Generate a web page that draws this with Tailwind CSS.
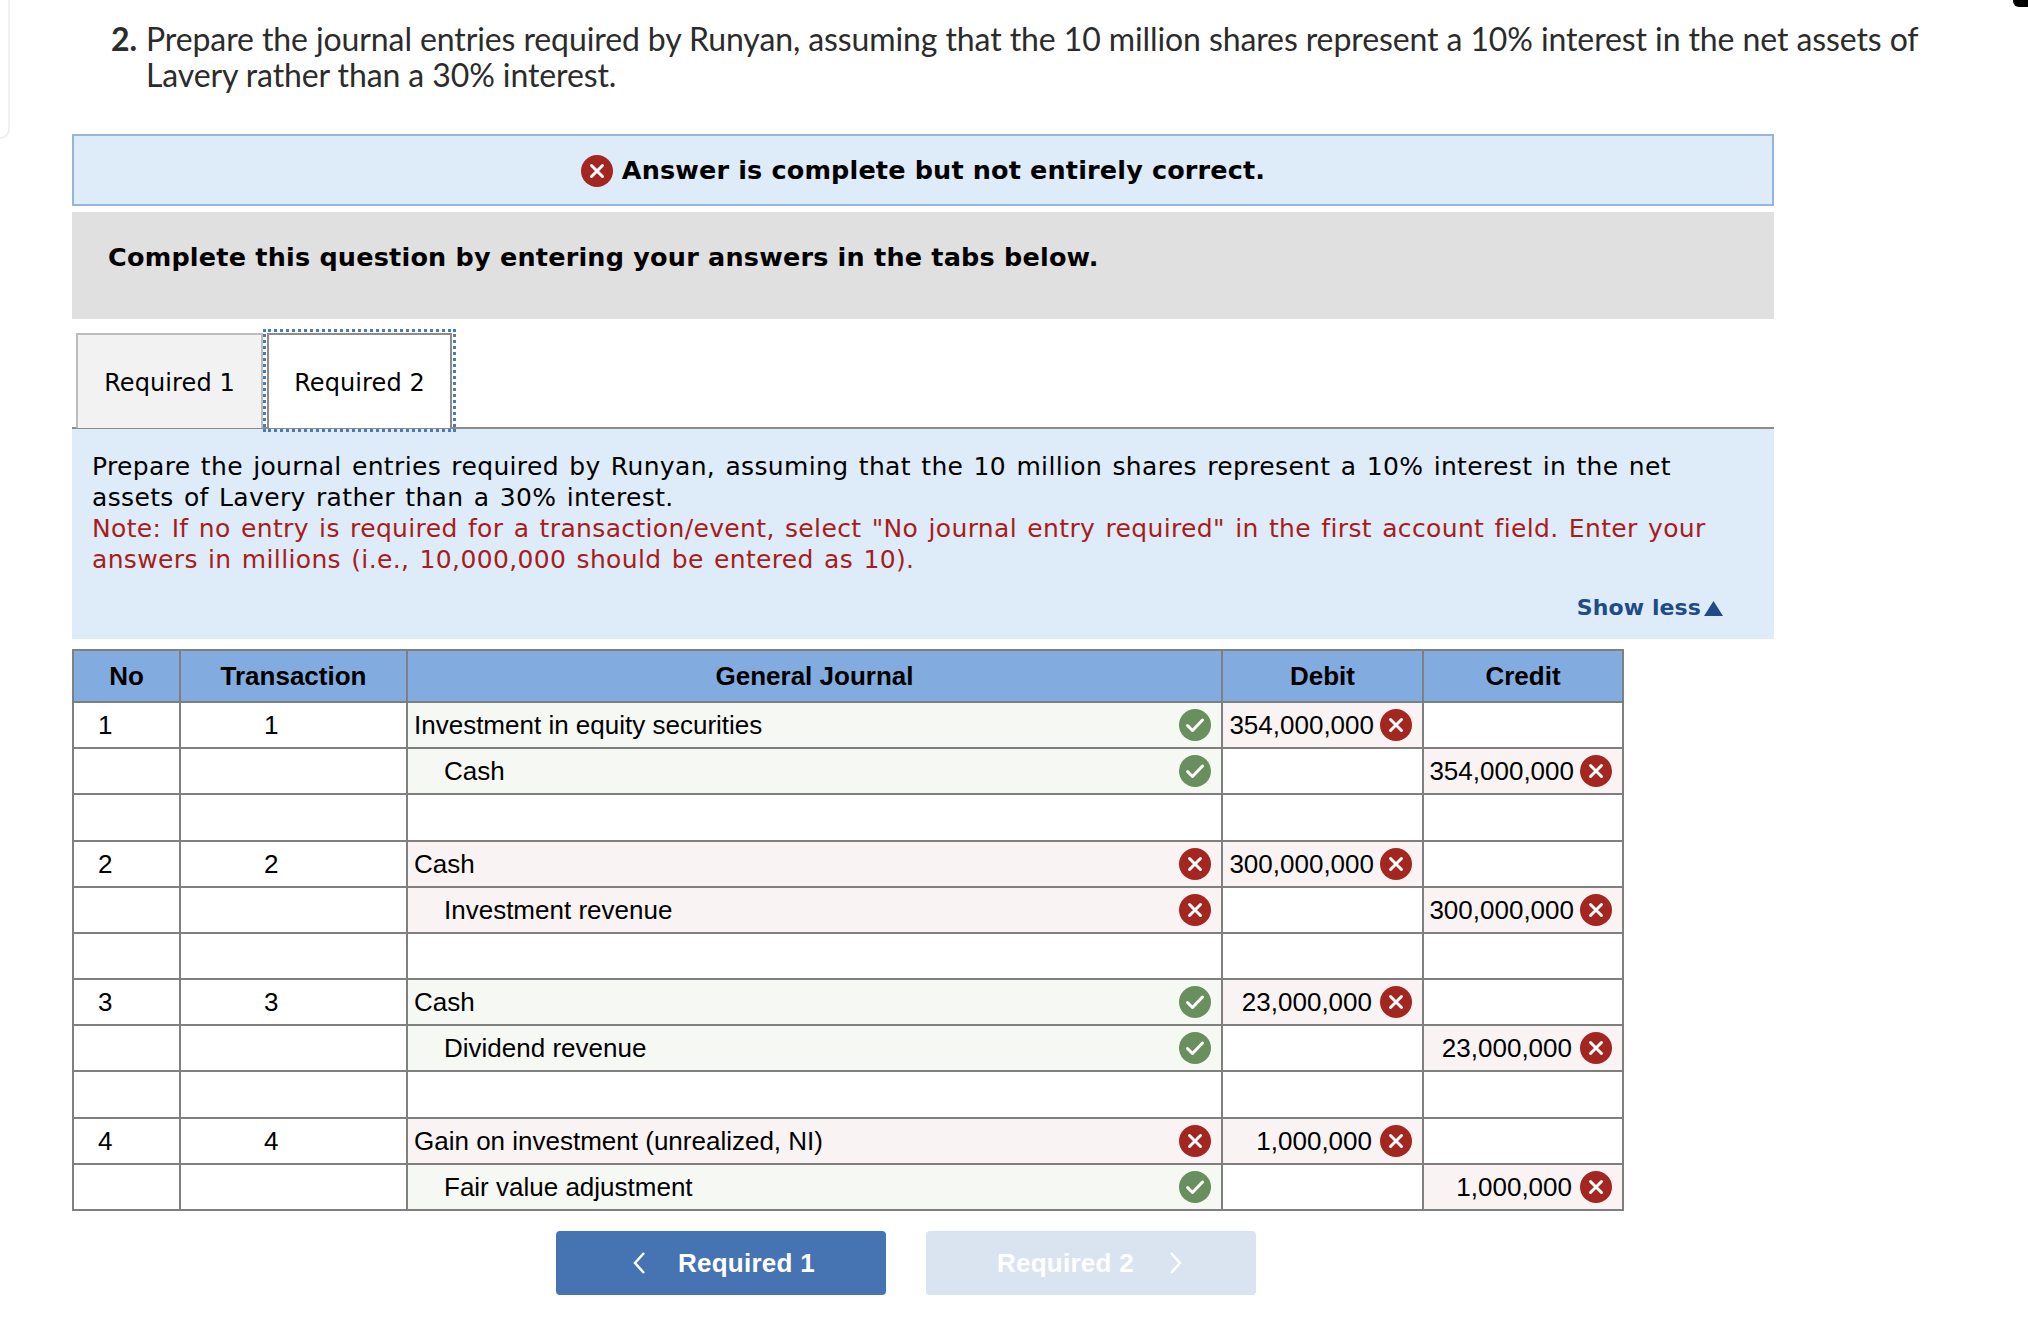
<!DOCTYPE html>
<html lang="en">
<head>
<meta charset="utf-8">
<title>Journal entries</title>
<script src="https://cdn.jsdelivr.net/npm/@tailwindcss/browser@4"></script>
</head>
<body class="bg-white relative w-[2028px] h-[1338px] overflow-hidden">
<svg class="hidden" aria-hidden="true">
  <symbol id="x" viewBox="0 0 32 32"><circle cx="16" cy="16" r="16" fill="#a32720"/><path d="M10.5 10.5 21.5 21.5M21.5 10.5 10.5 21.5" stroke="#fff" stroke-width="3" stroke-linecap="round" fill="none"/></symbol>
  <symbol id="c" viewBox="0 0 32 32"><circle cx="16" cy="16" r="16" fill="#6a8f5f"/><path d="M8.5 16.5 13.5 21.5 23.5 11" stroke="#fff" stroke-width="3" stroke-linecap="round" stroke-linejoin="round" fill="none"/></symbol>
</svg>
<div class="absolute left-0 top-0 w-[10px] h-[139px] border-r-2 border-b-2 border-[#f0f0f0] rounded-br-[12px]"></div>
<div class="absolute left-[2013px] top-0 w-[20px] h-[7px] bg-black rounded-bl-[6px]"></div>

<div class="pl-[72px] pt-[21px]">
  <p class="ml-[74px] w-[1860px] text-[32px] leading-[36px] text-[#2b2b2b] font-['Lato',sans-serif] relative tracking-[-0.1px]"><b class="absolute left-[-35px]">2.</b>Prepare the journal entries required by Runyan, assuming that the 10 million shares represent a 10% interest in the net assets of<br>Lavery rather than a 30% interest.</p>

  <div class="w-[1702px] font-['DejaVu_Sans',sans-serif] text-black">
    <div class="mt-[41px] h-[72px] border-2 border-[#95b5db] bg-[#deebf9] flex items-center justify-center gap-[9px] pt-[1px] text-[25.5px] tracking-[0.15px] font-bold">
      <svg class="w-[32px] h-[32px]"><use href="#x"/></svg><span>Answer is complete but not entirely correct.</span>
    </div>
    <div class="mt-[6px] h-[107px] bg-[#e0e0e0] pl-[36px] pt-[28px] text-[25.5px] tracking-[0.2px] leading-[34px] font-bold">Complete this question by entering your answers in the tabs below.</div>

    <div class="mt-[14px] h-[96px] pl-[4px] flex border-b-2 border-[#8c8c8c] text-[24px] tracking-[0.1px]">
      <div class="w-[187px] h-[95px] pt-[2px] bg-[#f2f2f2] border-2 border-b-0 border-[#bdbdbd] flex items-center justify-center">Required 1</div>
      <div class="ml-[4px] w-[185px] h-[95px] pt-[2px] bg-white border-2 border-b-0 border-[#8c8c8c] flex items-center justify-center outline-[3px] outline-dotted outline-[#4a7ab8] outline-offset-[1px] relative z-10">Required 2</div>
    </div>

    <div class="h-[210px] bg-[#deebf9] pl-[20px] pr-[44px] pt-[22px] text-[25px] tracking-[0.35px] [word-spacing:2px] leading-[31px] relative">
      <p>Prepare the journal entries required by Runyan, assuming that the 10 million shares represent a 10% interest in the net assets of Lavery rather than a 30% interest.</p>
      <p class="text-[#a81c1c]">Note: If no entry is required for a transaction/event, select "No journal entry required" in the first account field. Enter your answers in millions (i.e., 10,000,000 should be entered as 10).</p>
      <div class="absolute right-[51px] bottom-[17px] flex items-center gap-[3px] text-[22px] tracking-[0.1px] [word-spacing:0] leading-[28px] font-bold text-[#1f4b86]">Show less<svg class="w-[19px] h-[15px]" viewBox="0 0 19 15"><path d="M9.5 0 19 15H0Z" fill="#1f4b86"/></svg></div>
    </div>
  </div>

  <table class="mt-[10px] w-[1550px] table-fixed border-collapse font-['Liberation_Sans',sans-serif] text-[26px] text-black">
    <colgroup><col class="w-[107px]"><col class="w-[227px]"><col class="w-[815px]"><col class="w-[201px]"><col class="w-[200px]"></colgroup>
    <thead>
      <tr class="h-[52px] bg-[#82acdf] font-bold">
        <th class="border-2 border-[#7f7f7f] p-0 font-bold">No</th><th class="border-2 border-[#7f7f7f] p-0 font-bold">Transaction</th><th class="border-2 border-[#7f7f7f] p-0 font-bold">General Journal</th><th class="border-2 border-[#7f7f7f] p-0 font-bold">Debit</th><th class="border-2 border-[#7f7f7f] p-0 font-bold">Credit</th>
      </tr>
    </thead>
    <tbody>
      <tr class="h-[46px]">
        <td class="border-2 border-[#7f7f7f] p-0 pl-[24px]">1</td><td class="border-2 border-[#7f7f7f] p-0 pl-[83px]">1</td>
        <td class="border-2 border-[#7f7f7f] p-0 bg-[#f6f8f4]"><div class="flex items-center justify-between pl-[6px] pr-[10px]"><span>Investment in equity securities</span><svg class="w-[32px] h-[32px]"><use href="#c"/></svg></div></td>
        <td class="border-2 border-[#7f7f7f] p-0 bg-[#faf3f3]"><div class="flex items-center justify-end gap-[6px] pr-[10px]"><span>354,000,000</span><svg class="w-[32px] h-[32px]"><use href="#x"/></svg></div></td>
        <td class="border-2 border-[#7f7f7f] p-0"></td>
      </tr>
      <tr class="h-[46px]">
        <td class="border-2 border-[#7f7f7f] p-0"></td><td class="border-2 border-[#7f7f7f] p-0"></td>
        <td class="border-2 border-[#7f7f7f] p-0 bg-[#f6f8f4]"><div class="flex items-center justify-between pl-[36px] pr-[10px]"><span>Cash</span><svg class="w-[32px] h-[32px]"><use href="#c"/></svg></div></td>
        <td class="border-2 border-[#7f7f7f] p-0"></td>
        <td class="border-2 border-[#7f7f7f] p-0 bg-[#faf3f3]"><div class="flex items-center justify-end gap-[6px] pr-[10px]"><span>354,000,000</span><svg class="w-[32px] h-[32px]"><use href="#x"/></svg></div></td>
      </tr>
      <tr class="h-[47px]"><td class="border-2 border-[#7f7f7f] p-0"></td><td class="border-2 border-[#7f7f7f] p-0"></td><td class="border-2 border-[#7f7f7f] p-0"></td><td class="border-2 border-[#7f7f7f] p-0"></td><td class="border-2 border-[#7f7f7f] p-0"></td></tr>

      <tr class="h-[46px]">
        <td class="border-2 border-[#7f7f7f] p-0 pl-[24px]">2</td><td class="border-2 border-[#7f7f7f] p-0 pl-[83px]">2</td>
        <td class="border-2 border-[#7f7f7f] p-0 bg-[#faf3f3]"><div class="flex items-center justify-between pl-[6px] pr-[10px]"><span>Cash</span><svg class="w-[32px] h-[32px]"><use href="#x"/></svg></div></td>
        <td class="border-2 border-[#7f7f7f] p-0 bg-[#faf3f3]"><div class="flex items-center justify-end gap-[6px] pr-[10px]"><span>300,000,000</span><svg class="w-[32px] h-[32px]"><use href="#x"/></svg></div></td>
        <td class="border-2 border-[#7f7f7f] p-0"></td>
      </tr>
      <tr class="h-[46px]">
        <td class="border-2 border-[#7f7f7f] p-0"></td><td class="border-2 border-[#7f7f7f] p-0"></td>
        <td class="border-2 border-[#7f7f7f] p-0 bg-[#faf3f3]"><div class="flex items-center justify-between pl-[36px] pr-[10px]"><span>Investment revenue</span><svg class="w-[32px] h-[32px]"><use href="#x"/></svg></div></td>
        <td class="border-2 border-[#7f7f7f] p-0"></td>
        <td class="border-2 border-[#7f7f7f] p-0 bg-[#faf3f3]"><div class="flex items-center justify-end gap-[6px] pr-[10px]"><span>300,000,000</span><svg class="w-[32px] h-[32px]"><use href="#x"/></svg></div></td>
      </tr>
      <tr class="h-[46px]"><td class="border-2 border-[#7f7f7f] p-0"></td><td class="border-2 border-[#7f7f7f] p-0"></td><td class="border-2 border-[#7f7f7f] p-0"></td><td class="border-2 border-[#7f7f7f] p-0"></td><td class="border-2 border-[#7f7f7f] p-0"></td></tr>

      <tr class="h-[46px]">
        <td class="border-2 border-[#7f7f7f] p-0 pl-[24px]">3</td><td class="border-2 border-[#7f7f7f] p-0 pl-[83px]">3</td>
        <td class="border-2 border-[#7f7f7f] p-0 bg-[#f6f8f4]"><div class="flex items-center justify-between pl-[6px] pr-[10px]"><span>Cash</span><svg class="w-[32px] h-[32px]"><use href="#c"/></svg></div></td>
        <td class="border-2 border-[#7f7f7f] p-0 bg-[#faf3f3]"><div class="flex items-center justify-end gap-[8px] pr-[10px]"><span>23,000,000</span><svg class="w-[32px] h-[32px]"><use href="#x"/></svg></div></td>
        <td class="border-2 border-[#7f7f7f] p-0"></td>
      </tr>
      <tr class="h-[46px]">
        <td class="border-2 border-[#7f7f7f] p-0"></td><td class="border-2 border-[#7f7f7f] p-0"></td>
        <td class="border-2 border-[#7f7f7f] p-0 bg-[#f6f8f4]"><div class="flex items-center justify-between pl-[36px] pr-[10px]"><span>Dividend revenue</span><svg class="w-[32px] h-[32px]"><use href="#c"/></svg></div></td>
        <td class="border-2 border-[#7f7f7f] p-0"></td>
        <td class="border-2 border-[#7f7f7f] p-0 bg-[#faf3f3]"><div class="flex items-center justify-end gap-[8px] pr-[10px]"><span>23,000,000</span><svg class="w-[32px] h-[32px]"><use href="#x"/></svg></div></td>
      </tr>
      <tr class="h-[47px]"><td class="border-2 border-[#7f7f7f] p-0"></td><td class="border-2 border-[#7f7f7f] p-0"></td><td class="border-2 border-[#7f7f7f] p-0"></td><td class="border-2 border-[#7f7f7f] p-0"></td><td class="border-2 border-[#7f7f7f] p-0"></td></tr>

      <tr class="h-[46px]">
        <td class="border-2 border-[#7f7f7f] p-0 pl-[24px]">4</td><td class="border-2 border-[#7f7f7f] p-0 pl-[83px]">4</td>
        <td class="border-2 border-[#7f7f7f] p-0 bg-[#faf3f3]"><div class="flex items-center justify-between pl-[6px] pr-[10px]"><span>Gain on investment (unrealized, NI)</span><svg class="w-[32px] h-[32px]"><use href="#x"/></svg></div></td>
        <td class="border-2 border-[#7f7f7f] p-0 bg-[#faf3f3]"><div class="flex items-center justify-end gap-[8px] pr-[10px]"><span>1,000,000</span><svg class="w-[32px] h-[32px]"><use href="#x"/></svg></div></td>
        <td class="border-2 border-[#7f7f7f] p-0"></td>
      </tr>
      <tr class="h-[46px]">
        <td class="border-2 border-[#7f7f7f] p-0"></td><td class="border-2 border-[#7f7f7f] p-0"></td>
        <td class="border-2 border-[#7f7f7f] p-0 bg-[#f6f8f4]"><div class="flex items-center justify-between pl-[36px] pr-[10px]"><span>Fair value adjustment</span><svg class="w-[32px] h-[32px]"><use href="#c"/></svg></div></td>
        <td class="border-2 border-[#7f7f7f] p-0"></td>
        <td class="border-2 border-[#7f7f7f] p-0 bg-[#faf3f3]"><div class="flex items-center justify-end gap-[8px] pr-[10px]"><span>1,000,000</span><svg class="w-[32px] h-[32px]"><use href="#x"/></svg></div></td>
      </tr>
    </tbody>
  </table>

  <div class="mt-[20px] ml-[484px] flex gap-[40px] font-['Liberation_Sans',sans-serif] text-[26px] tracking-[0.25px] font-bold text-white">
    <div class="w-[330px] h-[64px] rounded-[4px] bg-[#4674b3] flex items-center pl-[77px] gap-[33px]"><svg class="w-[12px] h-[24px]" viewBox="0 0 12 24"><path d="M11 2 2 12 11 22" stroke="#fff" stroke-width="2.5" fill="none"/></svg><span>Required 1</span></div>
    <div class="w-[330px] h-[64px] rounded-[4px] bg-[#dae4f0] flex items-center pl-[71px] gap-[36px]"><span>Required 2</span><svg class="w-[12px] h-[24px]" viewBox="0 0 12 24"><path d="M1 2 10 12 1 22" stroke="#fff" stroke-width="2.5" fill="none"/></svg></div>
  </div>
</div>
</body>
</html>
